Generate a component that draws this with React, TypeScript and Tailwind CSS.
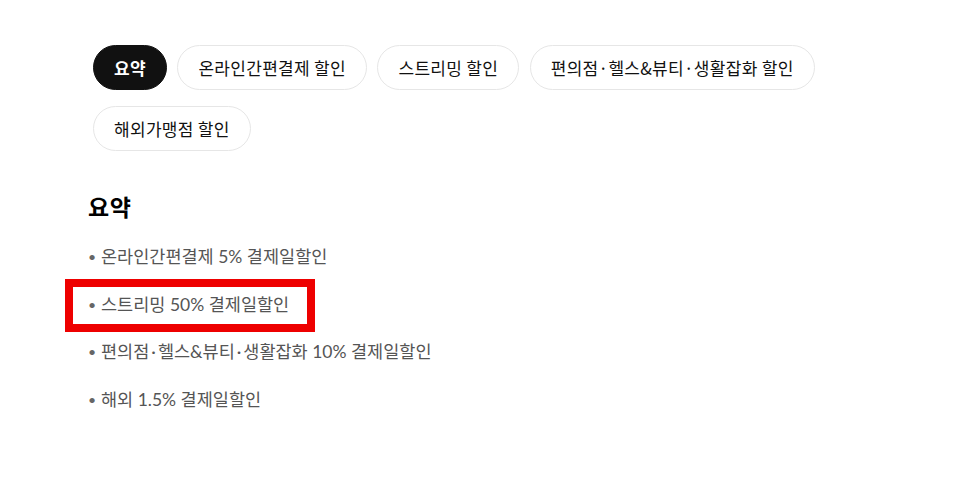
const tabs = ['요약', '온라인간편결제 할인', '스트리밍 할인', '편의점·헬스&뷰티·생활잡화 할인', '해외가맹점 할인']

const items = [
  '온라인간편결제 5% 결제일할인',
  '스트리밍 50% 결제일할인',
  '편의점·헬스&뷰티·생활잡화 10% 결제일할인',
  '해외 1.5% 결제일할인',
]

// Lato's middot is narrow, so give it a little air on both sides
function Dotted({ text }: { text: string }) {
  const parts = text.split('·')
  return (
    <>
      {parts.map((p, i) => (
        <span key={i}>
          {i > 0 && <span className="mx-[2px]">·</span>}
          {p}
        </span>
      ))}
    </>
  )
}

export default function App() {
  return (
    <div
      className="relative min-h-screen bg-white"
      style={{ fontFamily: 'Lato, "Noto Sans CJK KR", sans-serif' }}
    >
      <div className="pl-[93px] pt-[45px] pr-[130px]">
        <div className="flex flex-wrap gap-x-[10.5px] gap-y-[16px]">
          {tabs.map((t, i) => (
            <button
              key={t}
              className={
                i === 0
                  ? 'h-[45px] px-[20px] rounded-full bg-[#111111] border border-[#111111] text-white text-[17px] tracking-[0.3px] font-bold leading-none'
                  : 'h-[45px] px-[20px] rounded-full bg-white border border-[#e6e6e6] text-[#111111] text-[17px] tracking-[0.3px] leading-none'
              }
              style={{ fontFamily: '"Noto Sans CJK KR", sans-serif' }}
            >
              {t}
            </button>
          ))}
        </div>
      </div>

      <div className="pl-[88px] pt-[40px]">
        <h2
          className="text-[23px] tracking-[0.5px] font-bold text-black leading-[30px]"
          style={{ fontFamily: '"Noto Sans CJK KR", sans-serif' }}
        >
          요약
        </h2>
        <ul className="mt-[24px] flex flex-col gap-[23.5px]">
          {items.map((t) => (
            <li key={t} className="flex items-center text-[17.5px] leading-[24px] text-[#555555]">
              <span className="w-[13px] text-[14px] text-[#666666]">•</span>
              <Dotted text={t} />
            </li>
          ))}
        </ul>
      </div>

      <div className="absolute left-[65px] top-[279px] w-[250px] h-[53px] border-[8px] border-[#ee0000]" />
    </div>
  )
}
